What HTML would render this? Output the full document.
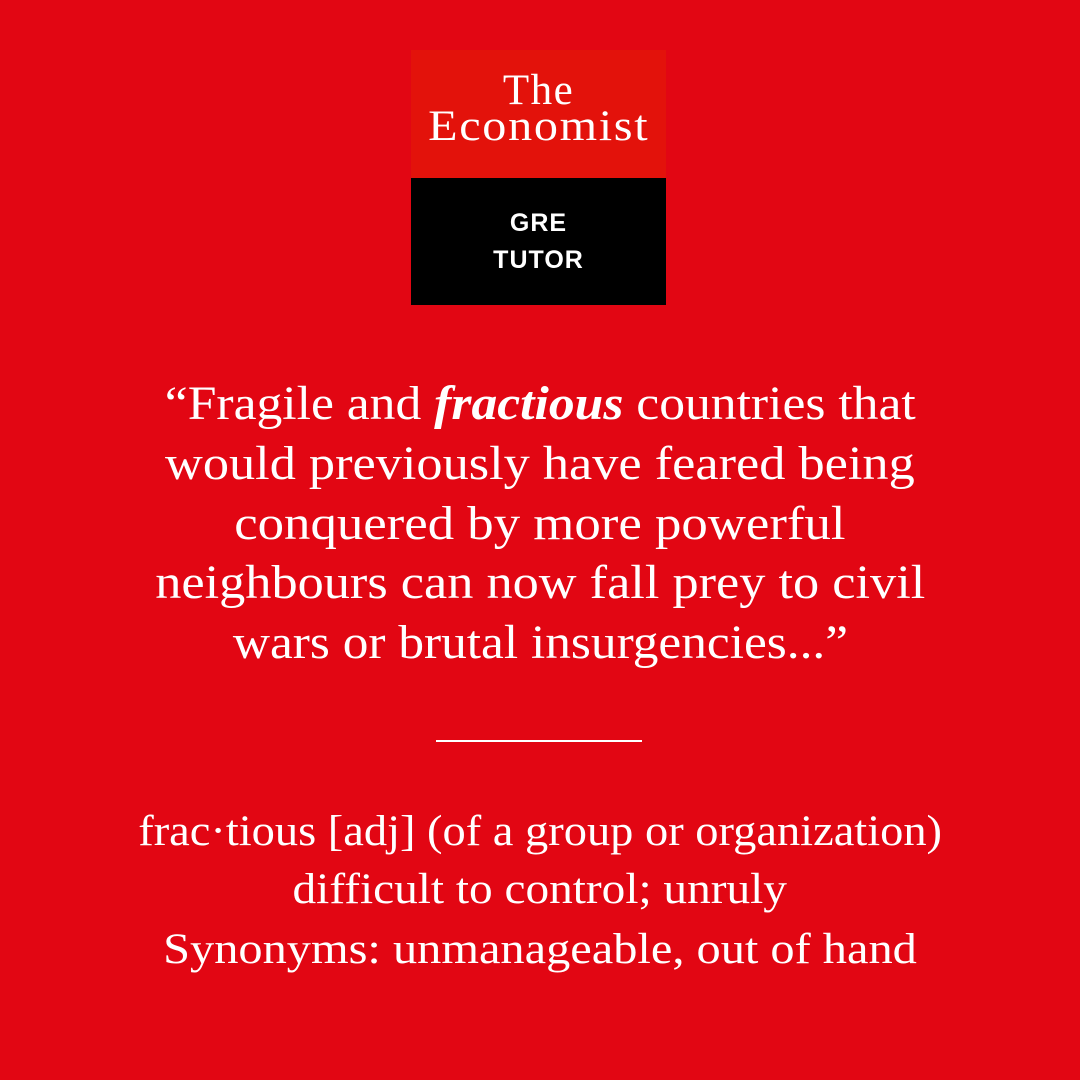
<!DOCTYPE html>
<html><head><meta charset="utf-8"><style>
html,body{margin:0;padding:0}
body{width:1080px;height:1080px;background:#e20613;position:relative;overflow:hidden;font-family:"Liberation Serif",serif;color:#fff}
.logo{position:absolute;left:411px;top:50px;width:255px;height:255px}
.top{position:absolute;left:0;top:0;width:255px;height:128px;background:#e3120b}
.bot{position:absolute;left:0;top:128px;width:255px;height:127px;background:#000}
.l{position:absolute;left:0;width:100%;text-align:center;white-space:nowrap}
.l span{display:inline-block}
.lg{font-size:43px;letter-spacing:1.5px;line-height:1}
.gt{font-family:"Liberation Sans",sans-serif;font-weight:bold;font-size:25px;line-height:1;letter-spacing:1px}
.q{font-size:48px;line-height:1;left:0;width:1080px}
.d{font-size:43px;line-height:1}
.rule{position:absolute;left:436px;top:740px;width:206px;height:2px;background:#fff}
</style></head><body>
<div class="logo">
 <div class="top">
  <div class="l lg" style="top:19px">The</div>
  <div class="l lg" style="top:55px"><span style="transform:scaleX(1.12)">Economist</span></div>
 </div>
 <div class="bot">
  <div class="l gt" style="top:33px">GRE</div>
  <div class="l gt" style="top:70px">TUTOR</div>
 </div>
</div>
<div class="l q" style="top:380px"><span style="transform:scaleX(1.075)">“Fragile and <b><i>fractious</i></b> countries that</span></div>
<div class="l q" style="top:440px"><span style="transform:scaleX(1.09)">would previously have feared being</span></div>
<div class="l q" style="top:500px"><span style="transform:scaleX(1.10)">conquered by more powerful</span></div>
<div class="l q" style="top:559px"><span style="transform:scaleX(1.09)">neighbours can now fall prey to civil</span></div>
<div class="l q" style="top:619px"><span style="transform:scaleX(1.07)">wars or brutal insurgencies...”</span></div>
<div class="rule"></div>
<div class="l d" style="top:810px"><span style="transform:scaleX(1.08)">frac·tious [adj] (of a group or organization)</span></div>
<div class="l d" style="top:868px"><span style="transform:scaleX(1.10)">difficult to control; unruly</span></div>
<div class="l d" style="top:928px"><span style="transform:scaleX(1.125)">Synonyms: unmanageable, out of hand</span></div>
</body></html>
